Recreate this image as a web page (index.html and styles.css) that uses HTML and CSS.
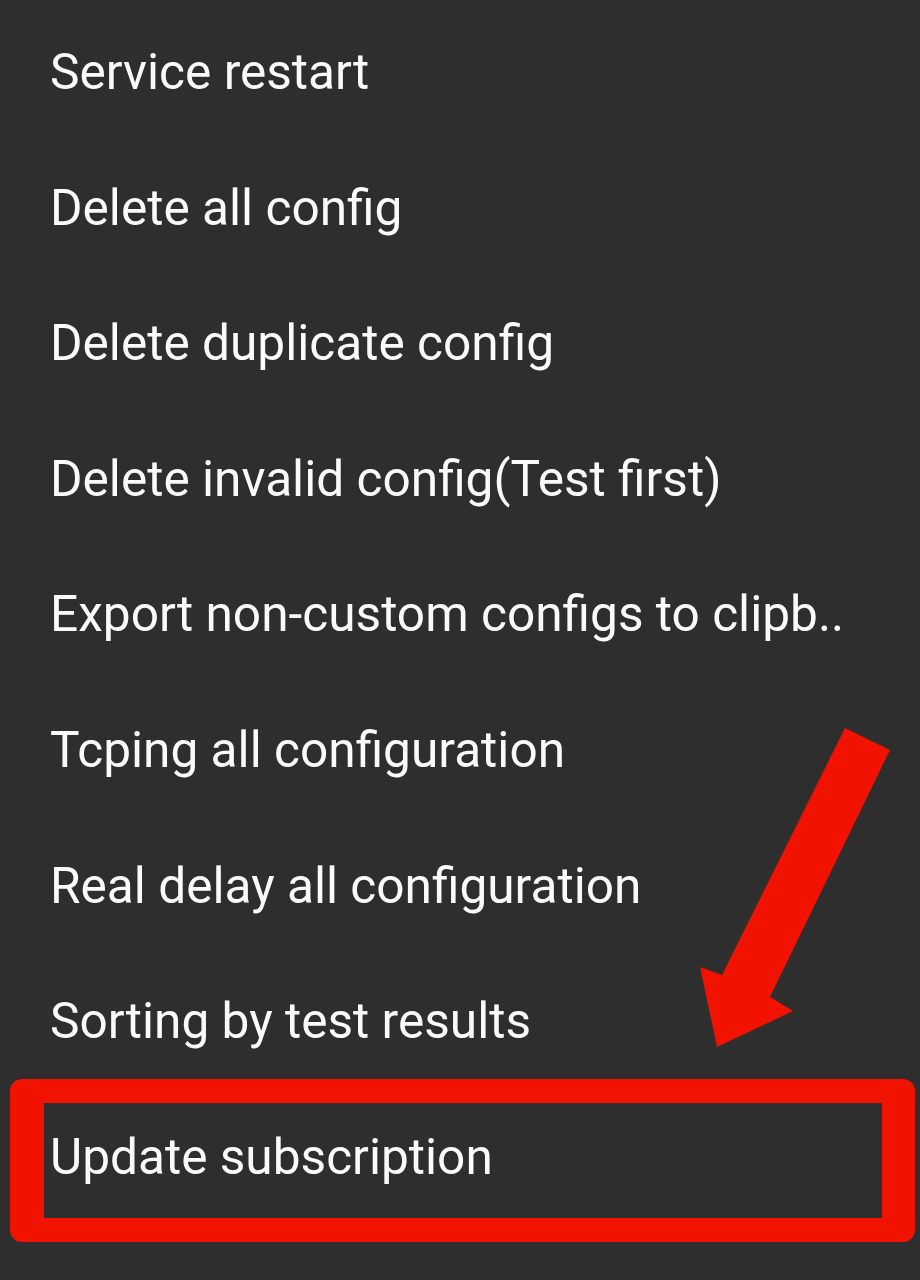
FILE: index.html
```html
<!DOCTYPE html>
<html lang="en">
<head>
<meta charset="utf-8">
<title>Menu</title>
<link rel="stylesheet" href="styles.css">
</head>
<body>
<div class="menu">
  <ul class="menu-list">
    <li class="menu-item">Service restart</li>
    <li class="menu-item">Delete all config</li>
    <li class="menu-item">Delete duplicate config</li>
    <li class="menu-item">Delete invalid config(Test first)</li>
    <li class="menu-item">Export non-custom configs to clipb..</li>
    <li class="menu-item">Tcping all configuration</li>
    <li class="menu-item">Real delay all configuration</li>
    <li class="menu-item">Sorting by test results</li>
    <li class="menu-item">Update subscription</li>
  </ul>
  <div class="highlight-box"></div>
  <svg class="arrow" width="920" height="1280" viewBox="0 0 920 1280" aria-hidden="true">
    <polygon points="845,728 890,750 770,997 793,1011 717,1047 700,967 722,975" fill="#f21200"/>
  </svg>
</div>
</body>
</html>
```

FILE: styles.css
```css
html, body {
  margin: 0;
  padding: 0;
  background: #2e2e2e;
}

.menu {
  position: relative;
  width: 920px;
  height: 1280px;
  background: #2e2e2e;
  overflow: hidden;
}

.menu-list {
  list-style: none;
  margin: 0;
  padding: 5px 0 0 0;
}

.menu-item {
  height: 135.6px;
  line-height: 135.6px;
  padding-left: 50px;
  font-family: Roboto, "Noto Sans", sans-serif;
  font-size: 49.6px;
  color: #fafafa;
  white-space: nowrap;
}

.highlight-box {
  position: absolute;
  left: 10px;
  top: 1079px;
  width: 838px;
  height: 115px;
  border-style: solid;
  border-color: #f21200;
  border-width: 24px 33px 24px 34px;
  border-radius: 12px;
}

.arrow {
  position: absolute;
  left: 0;
  top: 0;
  pointer-events: none;
}
```
